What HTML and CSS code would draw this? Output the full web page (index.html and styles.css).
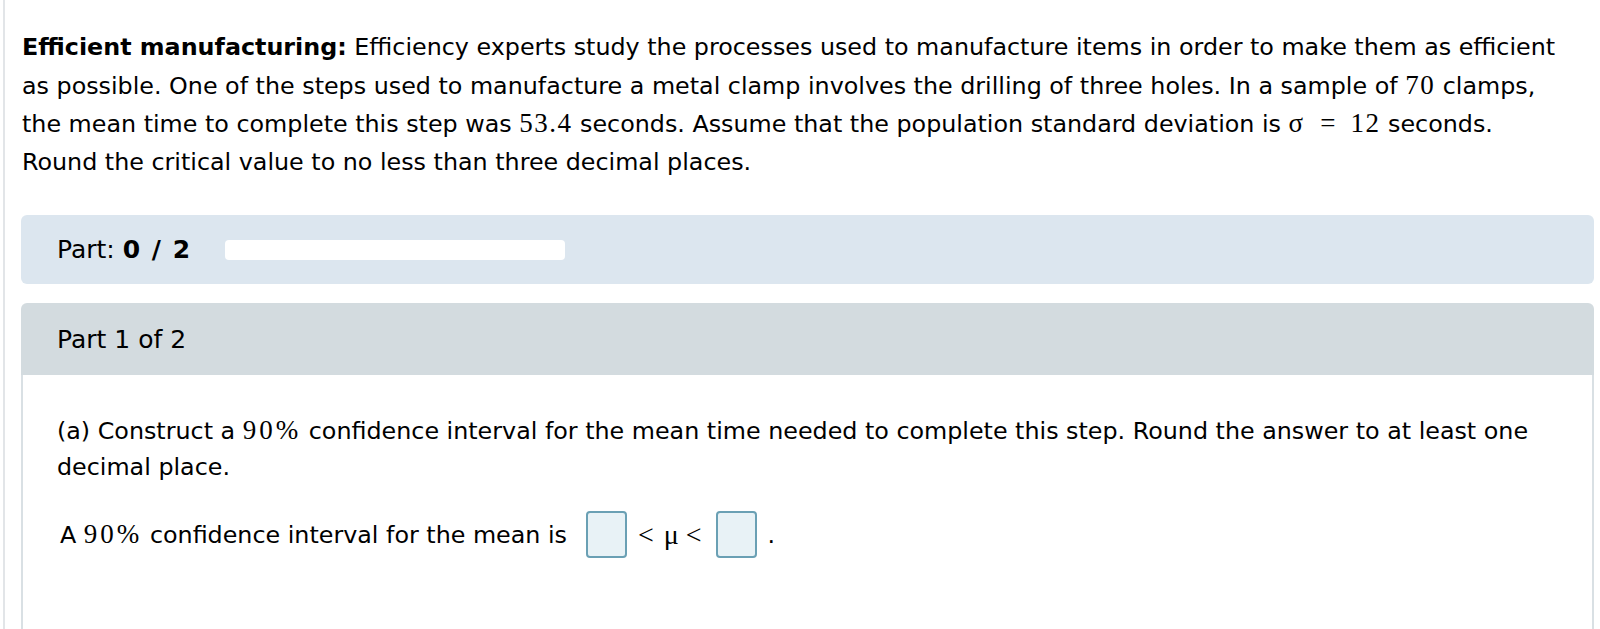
FILE: index.html
```html
<!DOCTYPE html>
<html lang="en">
<head>
<meta charset="utf-8">
<title>Efficient manufacturing</title>
<link rel="stylesheet" href="styles.css">
</head>
<body>
<div class="page">
  <p class="intro"><b>Efficient manufacturing:</b> Efficiency experts study the processes used to manufacture items in order to make them as efficient<br>as possible. One of the steps used to manufacture a metal clamp involves the drilling of three holes. In a sample of <span class="m">70</span> clamps,<br>the mean time to complete this step was <span class="m">53.4</span> seconds. Assume that the population standard deviation is <span class="m sig">σ</span> <span class="m eq">=</span> <span class="m">12</span> seconds.<br>Round the critical value to no less than three decimal places.</p>

  <div class="progress">
    <span class="progress-label">Part: <b class="count">0 / 2</b></span>
    <span class="progress-bar"></span>
  </div>

  <div class="part">
    <div class="part-head">Part 1 of 2</div>
    <div class="part-body">
      <p class="question">(a) Construct a <span class="m pctnum">90%</span> confidence interval for the mean time needed to complete this step. Round the answer to at least one decimal place.</p>
      <p class="answer"><span class="lead">A <span class="m pctnum">90%</span> confidence interval for the mean is</span><span class="box box1"></span><span class="m rel1">&lt;</span><span class="m mu">μ</span><span class="m rel2">&lt;</span><span class="box box2"></span><span class="dot">.</span></p>
    </div>
  </div>
</div>
</body>
</html>
```

FILE: styles.css
```css
html, body {
  margin: 0;
  padding: 0;
  background: #fff;
}

body {
  font-family: "DejaVu Sans", Verdana, sans-serif;
  font-size: 23.8px;
  color: #000;
}

.page {
  margin-left: 3px;
  border-left: 2px solid #e2e5e8;
  height: 629px;
  padding: 29px 6px 0 16px;
  box-sizing: border-box;
  display: flex;
  flex-direction: column;
}

.intro {
  margin: 0 0 34px 1px;
  line-height: 37.5px;
  white-space: nowrap;
}

.m {
  font-family: "Liberation Serif", "Times New Roman", serif;
  font-size: 27px;
  letter-spacing: 1.5px;
}

.pctnum {
  letter-spacing: 3px;
}

.eq {
  padding: 0 6px 0 8px;
}

.progress {
  height: 69px;
  flex: none;
  background: #dce6ef;
  border-radius: 6px;
  display: flex;
  align-items: center;
  padding-left: 36px;
  gap: 35px;
  font-size: 25px;
}

.count {
  word-spacing: 3px;
}

.progress-bar {
  display: block;
  width: 340px;
  height: 20px;
  background: #fff;
  border-radius: 4px;
}

.part {
  margin-top: 19px;
  flex: 1;
  display: flex;
  flex-direction: column;
}

.part-head {
  height: 72px;
  flex: none;
  background: #d3dbdf;
  border-radius: 6px 6px 0 0;
  display: flex;
  align-items: center;
  padding-left: 36px;
  font-size: 25px;
}

.part-body {
  flex: 1;
  border-left: 2px solid #d9e0e4;
  border-right: 2px solid #d9e0e4;
  padding: 38px 34px 0 34px;
}

.question {
  margin: 0;
  line-height: 35.5px;
}

.answer {
  margin: 26px 0 0 3px;
  display: flex;
  align-items: center;
  height: 47px;
}

.box {
  display: block;
  width: 37px;
  height: 43px;
  background: #e8f2f6;
  border: 2px solid #6aa0b4;
  border-radius: 4px;
}

.box1 {
  margin-left: 19px;
}

.rel1,
.rel2,
.mu {
  font-size: 28px;
  letter-spacing: 0;
}

.rel1 {
  margin-left: 11px;
}

.mu {
  margin-left: 10px;
}

.rel2 {
  margin-left: 7px;
}

.box2 {
  margin-left: 14px;
}

.dot {
  margin-left: 11px;
}
```
